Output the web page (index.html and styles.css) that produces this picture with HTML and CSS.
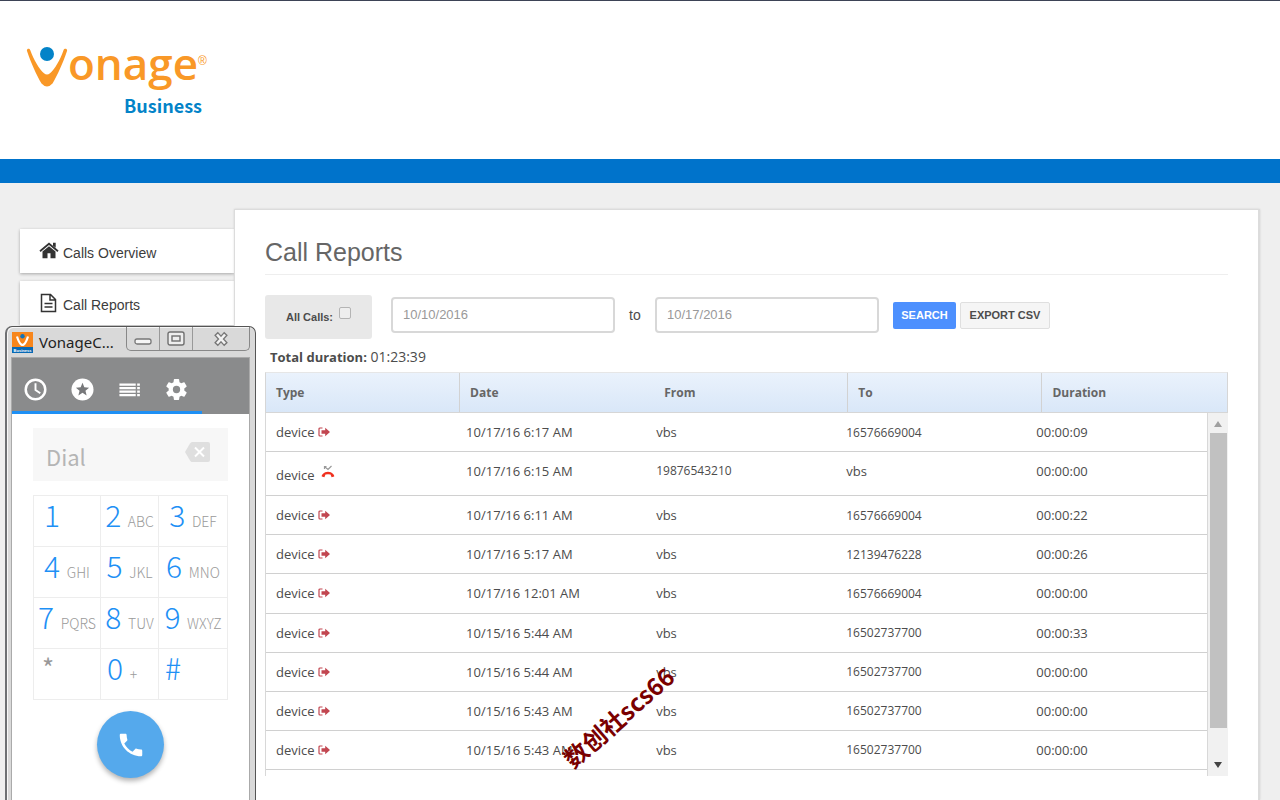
FILE: index.html
```
<!DOCTYPE html>
<html lang="en">
<head>
<meta charset="utf-8">
<title>Call Reports</title>
<link rel="stylesheet" href="styles.css">
</head>
<body>
<svg class="defs" aria-hidden="true">
  <symbol id="out" viewBox="0 0 12 10"><path d="M4.5 1H2a1 1 0 0 0-1 1v6a1 1 0 0 0 1 1h2.500" fill="none" stroke="#c24650" stroke-width="1.200"/><path d="M3.500 3.300h3.700V.700L12 5 7.200 9.300V6.700H3.500z" fill="#c24650"/></symbol>
  <symbol id="missed" viewBox="0 0 14 13"><path d="M3.500 4V1.500h2M4 2l3 2.500 3.500-3.500" fill="none" stroke="#999" stroke-width="1.200"/><path d="M.8 11.500C.2 10.500 2.800 6.800 7 6.800s6.800 3.700 6.200 4.700l-2.600.7-1.100-2.600Q7 8.800 4.500 9.600l-1.100 2.600z" fill="#f0311f"/></symbol>
</svg>
<header class="top">
  <div class="logo">
    <div class="wordmark">
      <svg class="mark" width="42" height="42" viewBox="0 0 42 42" aria-hidden="true"><path d="M1 4C.3 1.600 3.400.800 4.300 3.200C8 13 13 22 18 26.200Q21 29 24 26.200C29 22 34 13 37.500 3.200C38.400.800 41.800 1.600 41 4C37 16 31.500 28 26.500 36.500Q21 42.500 15.500 36.500C10.500 28 5 16 1 4Z" fill="#f99827"/><circle cx="21" cy="7" r="7" fill="#0383c8"/></svg>
      <span class="name">onage</span><span class="reg">®</span>
    </div>
    <div class="biz">Business</div>
  </div>
</header>
<div class="band"></div>
<div class="layout">
  <nav class="side">
    <a href="#"><svg width="20" height="18" viewBox="0 0 20 18"><path d="M10 4.200l6.500 5.300v6.700h-5v-5h-3v5h-5V9.500z" fill="#333"/><path d="M1 9.200L10 1.700l9 7.500" fill="none" stroke="#333" stroke-width="1.800"/><path d="M14 .800h2.700v5L14 3.700z" fill="#333"/></svg><span>Calls Overview</span></a>
    <a href="#"><svg width="20" height="20" viewBox="0 0 20 20" fill="none" stroke="#333" stroke-width="1.500"><path d="M2.500 1.500h9l5 5v12h-14zM11 1.500V7h5.500M5.500 10.500h8M5.500 14h8"/></svg><span>Call Reports</span></a>
  </nav>
  <main class="panel">
    <h1>Call Reports</h1>
    <form class="filters">
      <label class="all">All Calls: <input type="checkbox"></label>
      <input class="date" type="text" value="10/10/2016" aria-label="From date">
      <span class="to">to</span>
      <input class="date" type="text" value="10/17/2016" aria-label="To date">
      <button class="btn search" type="button">SEARCH</button>
      <button class="btn export" type="button">EXPORT CSV</button>
    </form>
    <p class="total"><b>Total duration:</b> 01:23:39</p>
    <table class="head"><thead><tr><th>Type</th><th>Date</th><th>From</th><th>To</th><th>Duration</th></tr></thead></table>
    <div class="scroller">
      <table class="rows"><tbody>
        <tr><td>device <svg class="out"><use href="#out"/></svg></td><td>10/17/16 6:17 AM</td><td>vbs</td><td class="num">16576669004</td><td>00:00:09</td></tr>
        <tr class="tall"><td><span class="low">device <svg class="missed"><use href="#missed"/></svg></span></td><td>10/17/16 6:15 AM</td><td class="num">19876543210</td><td>vbs</td><td>00:00:00</td></tr>
        <tr><td>device <svg class="out"><use href="#out"/></svg></td><td>10/17/16 6:11 AM</td><td>vbs</td><td class="num">16576669004</td><td>00:00:22</td></tr>
        <tr><td>device <svg class="out"><use href="#out"/></svg></td><td>10/17/16 5:17 AM</td><td>vbs</td><td class="num">12139476228</td><td>00:00:26</td></tr>
        <tr><td>device <svg class="out"><use href="#out"/></svg></td><td>10/17/16 12:01 AM</td><td>vbs</td><td class="num">16576669004</td><td>00:00:00</td></tr>
        <tr><td>device <svg class="out"><use href="#out"/></svg></td><td>10/15/16 5:44 AM</td><td>vbs</td><td class="num">16502737700</td><td>00:00:33</td></tr>
        <tr><td>device <svg class="out"><use href="#out"/></svg></td><td>10/15/16 5:44 AM</td><td>vbs</td><td class="num">16502737700</td><td>00:00:00</td></tr>
        <tr><td>device <svg class="out"><use href="#out"/></svg></td><td>10/15/16 5:43 AM</td><td>vbs</td><td class="num">16502737700</td><td>00:00:00</td></tr>
        <tr><td>device <svg class="out"><use href="#out"/></svg></td><td>10/15/16 5:43 AM</td><td>vbs</td><td class="num">16502737700</td><td>00:00:00</td></tr>
      </tbody></table>
      <div class="bar">
        <svg width="10" height="6" viewBox="0 0 10 6"><path d="M5 0l4 6H1z" fill="#a0a0a0"/></svg>
        <div class="thumb"></div>
        <svg class="down" width="10" height="6" viewBox="0 0 10 6"><path d="M5 6l4-6H1z" fill="#444"/></svg>
      </div>
    </div>
  </main>
</div>

<section class="window" aria-label="Dialer">
  <div class="title">
    <svg width="21" height="21" viewBox="0 0 21 21"><path d="M0 0h21v15H0z" fill="#f7861c"/><path d="M0 15h21v6H0z" fill="#0869b5"/><path d="M5 4.500q2 6.500 4.300 8 1.200.8 2.400 0 2.300-1.500 4.300-8" fill="none" stroke="#fff" stroke-width="2.200"/><circle cx="10.500" cy="4.300" r="2.200" fill="#1373b8"/><text x="10.500" y="19.500" text-anchor="middle" class="tiny">Business</text></svg>
    <span class="caption">VonageC...</span>
    <div class="controls">
      <button type="button" aria-label="Minimize"><svg width="18" height="16" viewBox="0 0 18 16"><rect x="1" y="8" width="16" height="5" rx="2" fill="#f5f5f5" stroke="#777" stroke-width="1.300"/></svg></button>
      <button type="button" aria-label="Maximize"><svg width="18" height="16" viewBox="0 0 18 16" fill="#eee" stroke="#707070" stroke-width="1.400"><rect x="1" y="1" width="16" height="13" rx="2"/><rect x="5" y="5" width="8" height="5"/></svg></button>
      <button type="button" aria-label="Close"><svg width="18" height="16" viewBox="0 0 18 16"><path d="M4 2.500l10 11M14 2.500L4 13.500" stroke="#777" stroke-width="5"/><path d="M5 3.500l8 9M13 3.500l-8 9" stroke="#f2f2f2" stroke-width="2.600"/></svg></button>
    </div>
  </div>
  <div class="app">
    <div class="tabs">
      <button type="button" aria-label="Recent"><svg viewBox="0 0 24 24"><circle cx="12" cy="12" r="10.200" fill="none" stroke="#fff" stroke-width="2.600"/><path d="M12 5.500v7l5 3.500" fill="none" stroke="#fff" stroke-width="2"/></svg></button>
      <button type="button" aria-label="Favorites"><svg viewBox="0 0 24 24"><circle cx="12" cy="12" r="11.500" fill="#fff"/><path d="M12 5l1.900 4.700 5 .4-3.800 3.200 1.200 4.900-4.300-2.700-4.300 2.700 1.200-4.900-3.800-3.200 5-.4z" fill="#77787a"/></svg></button>
      <button type="button" aria-label="List"><svg viewBox="0 0 24 24"><path d="M1.500 7h17M1.500 10.600h17M1.500 14.200h17M1.500 17.800h17M20 7h2.800M20 10.600h2.800M20 14.200h2.800M20 17.800h2.800" stroke="#fff" stroke-width="2.300"/></svg></button>
      <button type="button" aria-label="Settings"><svg viewBox="1 1 22 22"><path d="M19.430 12.980c.04-.32.070-.64.070-.98s-.03-.66-.07-.98l2.110-1.650c.19-.15.24-.42.120-.64l-2-3.460c-.12-.22-.39-.3-.61-.22l-2.490 1c-.52-.4-1.080-.73-1.690-.98l-.38-2.650A.488.488 0 0 0 14 2h-4c-.25 0-.46.18-.49.420l-.38 2.650c-.61.25-1.170.590-1.690.98l-2.490-1c-.23-.09-.49 0-.61.220l-2 3.460c-.13.220-.07.490.120.640l2.110 1.650c-.04.320-.07.650-.07.980s.03.660.07.980l-2.110 1.650c-.19.150-.24.420-.12.640l2 3.460c.12.220.39.300.61.220l2.490-1c.52.400 1.080.730 1.690.980l.38 2.650c.03.240.24.420.49.420h4c.25 0 .46-.18.490-.42l.38-2.650c.61-.25 1.170-.59 1.690-.98l2.490 1c.23.090.49 0 .61-.22l2-3.460c.12-.22.07-.49-.12-.64zM12 15.500a3.500 3.500 0 1 1 0-7 3.500 3.500 0 0 1 0 7z" fill="#fff"/></svg></button>
    </div>
    <div class="dial">
      <input type="text" placeholder="Dial" aria-label="Dial">
      <button type="button" aria-label="Delete"><svg width="25" height="20" viewBox="0 0 25 20"><path d="M7 0h16q2 0 2 2v16q0 2-2 2H7Q6 20 5 18.500L0 10 5 1.500Q6 0 7 0z" fill="#dfdfdf"/><path d="M10 5.500l9 9M19 5.500l-9 9" stroke="#fff" stroke-width="2"/></svg></button>
    </div>
    <div class="keys">
      <button type="button" class="left">1</button><button type="button">2 <small>ABC</small></button><button type="button">3 <small>DEF</small></button>
      <button type="button">4 <small>GHI</small></button><button type="button">5 <small>JKL</small></button><button type="button">6 <small>MNO</small></button>
      <button type="button">7 <small>PQRS</small></button><button type="button">8 <small>TUV</small></button><button type="button">9 <small>WXYZ</small></button>
      <button type="button" class="left star">*</button><button type="button" class="left zero">0 <small>+</small></button><button type="button" class="left zero">#</button>
    </div>
    <button class="call" type="button" aria-label="Call"><svg width="30" height="30" viewBox="0 0 24 24"><path d="M6.620 10.790c1.440 2.830 3.760 5.140 6.590 6.590l2.200-2.200c.27-.27.67-.36 1.020-.24 1.120.370 2.330.570 3.570.570.550 0 1 .450 1 1V20c0 .550-.45 1-1 1-9.390 0-17-7.610-17-17 0-.55.450-1 1-1h3.500c.550 0 1 .450 1 1 0 1.250.200 2.450.570 3.570.110.350.030.740-.25 1.020z" fill="#fff"/></svg></button>
  </div>
</section>
<div class="watermark">数创社scs66</div>
</body>
</html>
```
FILE: styles.css
```
* { box-sizing: border-box; }
body {
  margin: 0;
  height: 100vh;
  overflow: hidden;
  position: relative;
  display: flex;
  flex-direction: column;
  background: #efefef;
  border-top: 1px solid #3d4356;
  font: 14px "Liberation Sans", Arial, sans-serif;
  color: #4c4c4c;
}
button { border: 0; background: none; padding: 0; margin: 0; font: inherit; color: inherit; }
.defs { position: absolute; width: 0; height: 0; }

.top { flex: none; height: 158px; background: #fff; padding: 46px 26px; }
.logo { width: 184px; }
.wordmark { display: flex; height: 46px; }
.mark { flex: none; }
.name { font: 600 44px/32px "Open Sans", sans-serif; color: #f99827; }
.reg { font-size: 12px; line-height: 28px; color: #f99827; }
.biz { width: 176px; text-align: right; font: bold 18px/24px "Noto Sans CJK SC", sans-serif; color: #0383c8; }
.band { flex: none; height: 24px; background: #0073cb; }

.layout { flex: 1; min-height: 0; display: flex; padding: 26px 20px 0; }
.side { width: 214px; flex: none; padding-top: 20px; display: flex; flex-direction: column; gap: 8px; }
.side a {
  display: flex;
  align-items: center;
  gap: 4px;
  height: 44px;
  padding: 0 19px;
  background: #fff;
  color: #3c3c3c;
  text-decoration: none;
  box-shadow: 0 1px 3px rgba(0, 0, 0, .3);
}
.side span { padding-top: 4px; }
.panel {
  flex: 1;
  min-width: 0;
  background: #fff;
  border: 1px solid #dcdcdc;
  border-width: 1px 2px 0 1px;
  box-shadow: 0 0 2px rgba(0, 0, 0, .12);
  padding: 26px 30px 0;
  position: relative;
}
h1 { margin: 0; height: 39px; line-height: 32px; font-size: 25px; font-weight: normal; color: #666; border-bottom: 1px solid #eee; }
.filters { display: flex; align-items: center; margin-top: 20px; height: 44px; }
.all {
  display: flex;
  align-items: center;
  justify-content: center;
  gap: 6px;
  width: 107px;
  height: 44px;
  margin-right: 19px;
  background: #e8e8e8;
  border-radius: 3px;
  font-size: 11px;
  font-weight: bold;
}
.all input { appearance: none; width: 12px; height: 12px; margin: 0 0 8px; border: 1px solid #b4b4b4; border-radius: 2px; background: #eee; }
.date {
  width: 224px;
  height: 36px;
  margin-bottom: 4px;
  padding: 0 10px 2px;
  border: 2px solid #d8d8d8;
  border-radius: 4px;
  background: #fff;
  color: #999;
  font: 13px "Liberation Sans", Arial, sans-serif;
}
.to { width: 40px; padding-left: 14px; margin-bottom: 4px; }
.btn { height: 27px; border-radius: 2px; font-size: 11px; font-weight: bold; white-space: nowrap; }
.search { width: 63px; margin: 0 4px 4px 14px; background: #4d90fe; color: #fff; }
.export { width: 90px; margin-bottom: 4px; background: #f5f5f5; border: 1px solid #dfdfdf; }
.total { margin: 8px 0 5px 5px; font: 14px/20px "Open Sans", sans-serif; }
.total b { font-size: 13px; }
table { width: 100%; table-layout: fixed; border-collapse: separate; border-spacing: 0; font-family: "Open Sans", sans-serif; }
.head { border: 1px solid #d6d6d6; border-top-color: #e6e6e6; background: linear-gradient(#eaf2fc, #d9e7f8); }
.head th { width: 20.2%; height: 39px; padding: 0 10px; text-align: left; font-size: 12px; color: #666; border-right: 1px solid #d2d2d2; }
.head th:nth-child(2), .head th:last-child { border-right-color: transparent; }
.head th:last-child, .rows td:last-child { width: auto; }
.scroller { display: flex; height: 363px; overflow: hidden; border-left: 1px solid #d8d8d8; }
.rows { flex: 1; height: 357px; }
.rows td { width: 20.2%; height: 39px; padding: 0 10px; font-size: 13px; border-bottom: 1px solid #d0d0d0; white-space: nowrap; }
.rows .num { font-size: 12px; }
.rows .tall td { height: 44px; padding-bottom: 6px; }
.low { display: block; padding-top: 4px; height: 28px; line-height: 28px; }
.out { width: 12px; height: 10px; }
.missed { width: 14px; height: 13px; margin-left: 3px; vertical-align: 2px; }
.bar { flex: none; width: 21px; display: flex; flex-direction: column; align-items: center; padding: 8px 0; background: #f1f1f1; border-left: 1px solid #d8d8d8; }
.thumb { width: 17px; height: 295px; margin-top: 6px; background: #c1c1c1; }
.down { margin-top: auto; }

.window {
  position: absolute;
  left: 5px;
  top: 325px;
  bottom: 0;
  width: 251px;
  border: 1px solid #555;
  border-left: 2px solid #6e7073;
  border-bottom: 0;
  border-radius: 7px 7px 0 0;
  background: #d9d9d9;
  box-shadow: inset 1px 1px 0 #f7f7f7;
  padding: 0 5px;
  display: flex;
  flex-direction: column;
}
.title { flex: none; display: flex; align-items: center; height: 30px; }
.caption { margin-left: 6px; flex: 1; font: 15px "Noto Sans", sans-serif; color: #222; }
.tiny { font: bold 4px "Liberation Sans", sans-serif; fill: #fff; }
.controls { display: flex; align-self: flex-start; height: 24px; border: 1px solid #888; border-top: 0; border-radius: 0 0 5px 5px; }
.controls button { width: 33px; display: grid; place-items: center; border-right: 1px solid #999; }
.controls button:last-child { width: 56px; border: 0; }
.app { flex: 1; min-height: 0; background: #fff; border: 1px solid #aaa; border-width: 1px 1px 0; margin: 0 0 0 -1px; display: flex; flex-direction: column; align-items: center; }
.tabs { width: 100%; height: 56px; flex: none; display: flex; gap: 24px; padding: 7px 12px 0; background: linear-gradient(#1e90f5, #1e90f5) left bottom / 190px 3px no-repeat #8a8b8c; }
.tabs button { width: 23px; }
.tabs svg { width: 23px; height: 23px; display: block; }
.dial { flex: none; display: flex; width: 195px; height: 53px; margin-top: 14px; padding: 0 18px 2px 13px; background: #f7f7f7; }
.dial input { flex: 1; min-width: 0; border: 0; padding: 4px 0 0; background: none; font: 22px "Noto Sans CJK SC", sans-serif; }
.dial input::placeholder { color: #b5b5b5; opacity: 1; }
.keys { flex: none; display: grid; grid-template-columns: 67px 58px 69px; grid-auto-rows: 51px; width: 195px; margin-top: 14px; border: 1px solid #ededed; border-width: 1px 0 0 1px; }
.keys button { padding: 0 0 14px; border: 1px solid #ededed; border-width: 0 1px 1px 0; font: 300 30px/36px "Noto Sans CJK SC", sans-serif; color: #1e90f5; white-space: nowrap; }
.keys small { font-size: 14px; color: #9a9a9a; }
.keys .left { text-align: left; padding-left: 10px; }
.keys .zero { padding-left: 6px; }
.keys .star { font-size: 26px; font-weight: 400; padding-left: 8px; color: #999; }
.call { flex: none; width: 67px; height: 67px; margin-top: 11px; border-radius: 50%; background: #55a9ec; display: grid; place-items: center; box-shadow: 0 3px 5px rgba(0, 0, 0, .3); }
.watermark {
  position: absolute;
  left: 550px;
  top: 698px;
  font: bold 24px/36px "Noto Sans CJK SC", sans-serif;
  color: #7a0000;
  white-space: nowrap;
  transform: rotate(-41deg);
}
```
